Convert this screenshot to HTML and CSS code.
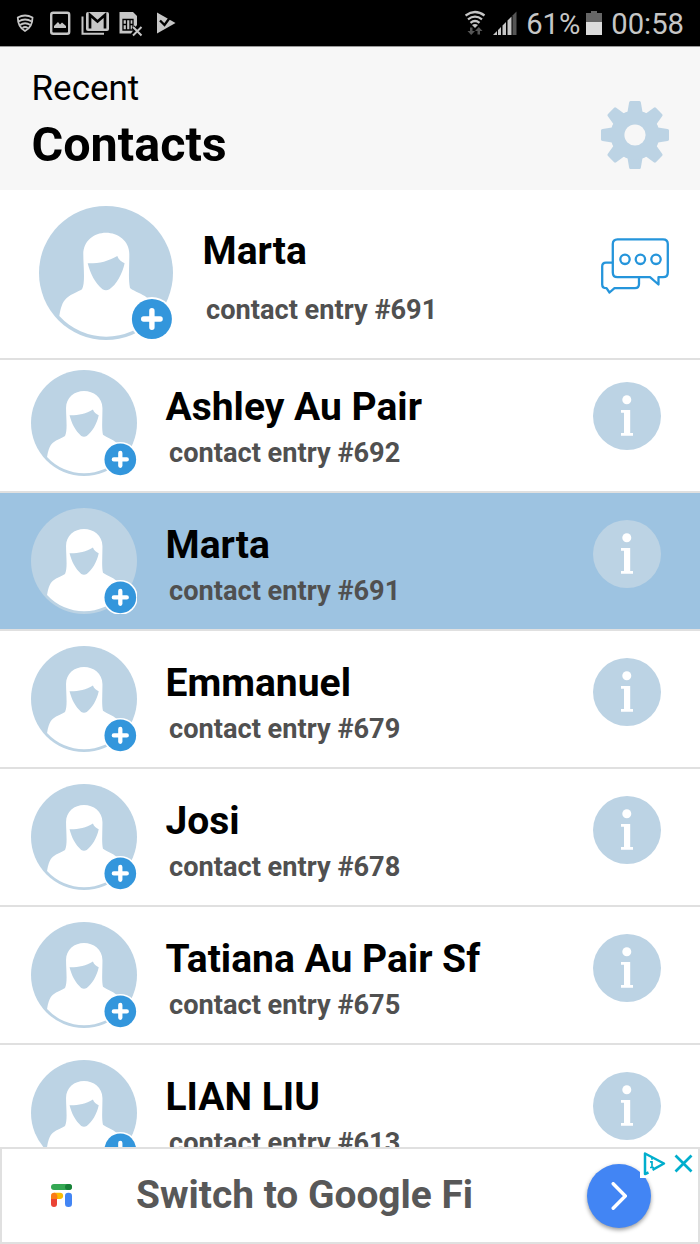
FILE: index.html
```html
<!DOCTYPE html>
<html lang="en">
<head>
  <meta charset="UTF-8" />
  <meta name="viewport" content="width=device-width, initial-scale=1.0" />
  <title>Recent Contacts</title>
  <link rel="stylesheet" href="styles.css">
</head>
<body>

  <!-- Shared icons -->
  <svg class="hidden">
    <symbol id="avatar" viewBox="0 0 134 134">
      <circle cx="67" cy="67" r="67" fill="#bcd3e4" />
      <path fill="#fff" d="M67 26.7C79 26.7 90.3 35 90.3 48C90.5 60 89 72 91 82C96 86 103 87.500 107.700 91.500C112.500 96 114 104 114 110A63.500 63.500 0 0 1 20.300 110C21.500 103 23 96 27.700 92C33 87.500 39 86 43 83.300C46.500 77 44.300 60 44.300 48C44.300 35 55 26.700 67 26.700Z" />
      <path fill="#bcd3e4" d="M48.700 57.300C60 57.500 69 55.500 78.300 50C79.500 53.500 82.500 56 85.600 57.300C83.500 68 77 79 70.500 83.300Q67 85.300 63.500 83.300C56 77 51.500 68 48.700 57.300Z" />
      <circle cx="112.900" cy="113" r="22" fill="#fff" />
      <circle cx="112.900" cy="113" r="20" fill="#3396dc" />
      <path d="M112.900 104.800V121.200M104.700 113H121.100" stroke="#fff" stroke-width="5.400" stroke-linecap="round" />
    </symbol>
    <symbol id="info" viewBox="0 0 68 68">
      <circle cx="34" cy="34" r="34" fill="#bcd3e4" />
      <circle cx="33.800" cy="17.800" r="4.500" fill="#fff" />
      <path fill="#fff" d="M28 28H37.200V51H40V53.700H28V51H31V30.700H28Z" />
    </symbol>
  </svg>

  <div class="screen">
    <!-- Status bar -->
    <div class="status-bar">
      <svg width="166" height="46" viewBox="12 0 166 46">
        <g fill="none" stroke="#c6c6c6" stroke-width="1.800">
          <path d="M17.800 17.500Q25 13.500 32.500 17.500C32.500 23.500 30 28.500 25 31C20.500 28.500 17.800 23.500 17.800 17.500Z" />
          <path d="M18.500 21.500Q25 17.500 31.800 21.500M20 25Q25 21.500 30.500 25M22.500 28Q25 26 27.800 28" />
          <rect x="51.200" y="12.700" width="18" height="21" rx="2" stroke-width="2.400" />
          <path d="M82.500 16.500V33.700H104" stroke-width="2" />
        </g>
        <g fill="#c6c6c6">
          <path d="M54 28V26L58 22L60 24.500L62 22.500L66 26V28Z" />
          <rect x="86" y="12" width="23" height="19" rx="2" />
          <path d="M119.500 12H133L137 16V25L131 33.500H119.500Z" />
          <path d="M157 12.500L175.500 23L157 33.500Z" />
        </g>
        <path d="M90 28.500V15L97.500 21.500L105 15V28.500" fill="none" stroke="#000" stroke-width="2.700" />
        <path d="M123 19.500H133V30H123ZM126.500 19.500V30M130 19.500V30M123 24.500H126M130 24.500H133" fill="none" stroke="#000" stroke-width="1.300" />
        <path d="M133 27L141.500 35.500M141.500 27L133 35.500" stroke="#000" stroke-width="4" />
        <path d="M133 27L141.500 35.500M141.500 27L133 35.500" stroke="#c6c6c6" stroke-width="2" />
        <path d="M160 20.500L164.500 25L172.500 14" fill="none" stroke="#000" stroke-width="2.400" />
      </svg>
      <div class="status-right">
        <svg width="52" height="26" viewBox="465 10 52 26">
          <g fill="none" stroke="#c6c6c6" stroke-width="2.300">
            <path d="M465.500 15.500Q475 8.500 484.500 15.500M468 19.300Q475 14 482 19.300M470.500 22.800Q475 19.300 479.500 22.800" />
          </g>
          <path d="M472 25Q475 23 478 25L475 28Z" fill="#c6c6c6" />
          <path d="M470 27.500H472.500V31H475L471.200 35L467.500 31H470ZM477.500 34.500H480V31H482.500L478.800 27L475 31H477.500Z" fill="#555" />
          <path d="M493 35L497 31V35ZM498 35V30L501 27V35ZM502.500 35V25.500L506 22V35ZM507.500 35V20.500L511.500 16.500V35Z" fill="#c6c6c6" />
          <path d="M512.500 35V15.500L516.500 11.500V35Z" fill="#555" />
        </svg>
        <span class="percent">61%</span>
        <svg width="16" height="24" viewBox="0 0 16 24">
          <path d="M0 2H5V0H11V2H16V11H0Z" fill="#666" />
          <rect y="11" width="16" height="13" fill="#dcdcdc" />
        </svg>
        <span class="clock">00:58</span>
      </div>
    </div>

    <!-- Header -->
    <div class="header">
      <div>
        <div class="header-small">Recent</div>
        <h1>Contacts</h1>
      </div>
      <svg class="gear" width="68" height="68" viewBox="-34 -34 68 68" fill="#bcd3e4">
        <path id="teeth" d="M-7.500 -23L-5.900 -32.500Q-5.700 -34 -4.500 -34H4.500Q5.700 -34 5.900 -32.500L7.500 -23V23L5.900 32.500Q5.700 34 4.500 34H-4.500Q-5.700 34 -5.900 32.500L-7.500 23Z" />
        <use href="#teeth" transform="rotate(45)" />
        <use href="#teeth" transform="rotate(90)" />
        <use href="#teeth" transform="rotate(135)" />
        <circle r="24.500" />
        <circle r="10.600" fill="#f7f7f7" />
      </svg>
    </div>

    <!-- Last contact -->
    <div class="recent">
      <svg class="avatar-big"><use href="#avatar" /></svg>
      <div class="text">
        <div class="name">Marta</div>
        <div class="entry">contact entry #691</div>
      </div>
      <svg class="chat" width="68" height="57" viewBox="0 0 68 57" fill="none" stroke="#2595db" stroke-width="2.300" stroke-linejoin="round">
        <path d="M16.500 1.300H62Q66.800 1.300 66.800 6V34.500Q66.800 39.200 62 39.200H57.500V46.500L49 39.200H16.500Q11.800 39.200 11.800 34.500V6Q11.800 1.300 16.500 1.300Z" />
        <path d="M12 24.600H5Q1.200 24.600 1.200 28.500V46.500Q1.200 50.200 5.500 50.200L8.500 54.500L13.500 50.200H34Q38 50.200 38 46V40" />
        <circle cx="24" cy="21.300" r="4.700" />
        <circle cx="39.400" cy="21.300" r="4.700" />
        <circle cx="55" cy="21.300" r="4.700" />
      </svg>
    </div>

    <!-- Contact list -->
    <div class="list">
      <div class="row">
        <svg class="avatar"><use href="#avatar" /></svg>
        <div class="text">
          <div class="name">Ashley Au Pair</div>
          <div class="entry">contact entry #692</div>
        </div>
        <svg class="info"><use href="#info" /></svg>
      </div>
      <div class="row selected">
        <svg class="avatar"><use href="#avatar" /></svg>
        <div class="text">
          <div class="name">Marta</div>
          <div class="entry">contact entry #691</div>
        </div>
        <svg class="info"><use href="#info" /></svg>
      </div>
      <div class="row">
        <svg class="avatar"><use href="#avatar" /></svg>
        <div class="text">
          <div class="name">Emmanuel</div>
          <div class="entry">contact entry #679</div>
        </div>
        <svg class="info"><use href="#info" /></svg>
      </div>
      <div class="row">
        <svg class="avatar"><use href="#avatar" /></svg>
        <div class="text">
          <div class="name">Josi</div>
          <div class="entry">contact entry #678</div>
        </div>
        <svg class="info"><use href="#info" /></svg>
      </div>
      <div class="row">
        <svg class="avatar"><use href="#avatar" /></svg>
        <div class="text">
          <div class="name">Tatiana Au Pair Sf</div>
          <div class="entry">contact entry #675</div>
        </div>
        <svg class="info"><use href="#info" /></svg>
      </div>
      <div class="row">
        <svg class="avatar"><use href="#avatar" /></svg>
        <div class="text">
          <div class="name">LIAN LIU</div>
          <div class="entry">contact entry #613</div>
        </div>
        <svg class="info"><use href="#info" /></svg>
      </div>
    </div>

    <!-- Ad banner -->
    <div class="ad">
      <svg width="21" height="23" viewBox="0 0 21 23">
        <rect width="21" height="6" rx="3" fill="#34a853" />
        <path d="M14 3A3 3 0 0 1 17 0H18A3 3 0 0 1 18 6H17A3 3 0 0 1 14 3Z" fill="#188038" />
        <path d="M3 8.700H9A3 3 0 0 1 9 15H3Z" fill="#fbbc04" />
        <path d="M0 14H6V20A3 3 0 0 1 0 20Z" fill="#ea4335" />
        <path d="M0 15V11.500A3 3 0 0 1 3 8.700Q6 9 6.300 12V15Z" fill="#fa7b17" />
        <rect x="14" y="8.700" width="7" height="14.300" rx="3.300" fill="#4285f4" />
      </svg>
      <span class="ad-text">Switch to Google Fi</span>
      <div class="ad-button">
        <svg width="16" height="28" viewBox="0 0 16 28" fill="none" stroke="#fff" stroke-width="3.400">
          <path d="M2.200 1.700L14.300 14L2.200 26.300" stroke-linecap="round" />
        </svg>
      </div>
      <div class="ad-choices">
        <svg width="58" height="29" viewBox="0 0 58 29" fill="none" stroke="#00aecd" stroke-width="2.500">
          <path d="M8.500 23.500L5 25V4.500L24 14.500L12.500 20.800" stroke-linejoin="round" />
          <path d="M12 8.800V10.800M10 12.800H12V18.500M10 18.500H14" stroke-width="1.700" />
          <path d="M35.500 6.500L51.500 22.500M51.500 6.500L35.500 22.500" stroke-width="2.700" />
        </svg>
      </div>
    </div>
  </div>

</body>
</html>
```
FILE: styles.css
```css
* {
  margin: 0;
  padding: 0;
  box-sizing: border-box;
  font-family: Roboto, sans-serif;
}

body {
  background: #fff;
}

svg {
  display: block;
  flex-shrink: 0;
}

.hidden {
  position: absolute;
  width: 0;
  height: 0;
}

.screen {
  width: 700px;
  height: 1244px;
  display: flex;
  flex-direction: column;
  overflow: hidden;
}

/* status bar */
.status-bar {
  height: 46px;
  background: #000;
  padding: 0 16px 0 12px;
  display: flex;
  justify-content: space-between;
  align-items: center;
  flex-shrink: 0;
}

.status-right {
  display: flex;
  align-items: center;
  color: #c6c6c6;
  font-size: 29.2px;
}

.percent {
  margin-left: 9px;
  margin-right: 6px;
  padding-top: 1px;
}

.clock {
  margin-left: 9px;
  padding-top: 1px;
}

/* header */
.header {
  height: 144px;
  background: #f7f7f7;
  border-top: 1px solid #999;
  padding: 21px 31px 0 31.5px;
  display: flex;
  justify-content: space-between;
  flex-shrink: 0;
}

.header-small {
  font-size: 35px;
  line-height: 42px;
}

h1 {
  font-size: 48.5px;
  line-height: 56px;
  margin-top: 7px;
}

.gear {
  margin-top: 33px;
}

/* contacts */
.recent {
  height: 170px;
  border-bottom: 2px solid #e0e0e0;
  padding: 16px 31px 0 39px;
  display: flex;
  align-items: flex-start;
  flex-shrink: 0;
}

.avatar-big {
  width: 134px;
  height: 134px;
  margin-right: 29.5px;
  overflow: visible;
}

.recent .text {
  padding-top: 23px;
}

.recent .entry {
  margin-top: 21px;
}

.chat {
  margin-top: 32px;
}

.list {
  flex: 1;
  overflow: hidden;
}

.row {
  height: 138px;
  border-bottom: 2px solid #e0e0e0;
  padding: 15px 39px 0 31px;
  display: flex;
  align-items: flex-start;
}

.row:first-child {
  height: 133px;
  padding-top: 10px;
}

.row.selected {
  background: #9dc3e1;
}

.avatar {
  width: 106px;
  height: 106px;
  margin-right: 28.5px;
  overflow: visible;
}

.text {
  flex: 1;
  padding-top: 15px;
}

.name {
  font-size: 39px;
  line-height: 44px;
  font-weight: bold;
  color: #000;
}

.entry {
  font-size: 27.2px;
  line-height: 32px;
  font-weight: bold;
  color: #505050;
  margin-top: 8px;
  padding-left: 3.5px;
}

.info {
  width: 68px;
  height: 68px;
  margin-top: 12px;
}

/* ad */
.ad {
  position: relative;
  height: 97px;
  border: 2px solid #e0e0e0;
  padding: 0 47px 0 49px;
  display: flex;
  align-items: center;
  flex-shrink: 0;
}

.ad-text {
  flex: 1;
  margin-left: 64px;
  padding-bottom: 2px;
  font-size: 38.9px;
  font-weight: bold;
  color: #585858;
}

.ad-button {
  width: 64px;
  height: 64px;
  border-radius: 50%;
  background: #4285f4;
  box-shadow: 0 2px 4px rgba(0, 0, 0, 0.4);
  display: flex;
  align-items: center;
  justify-content: center;
}

.ad-choices {
  position: absolute;
  top: 0;
  right: 0;
  background: #fff;
}
```
